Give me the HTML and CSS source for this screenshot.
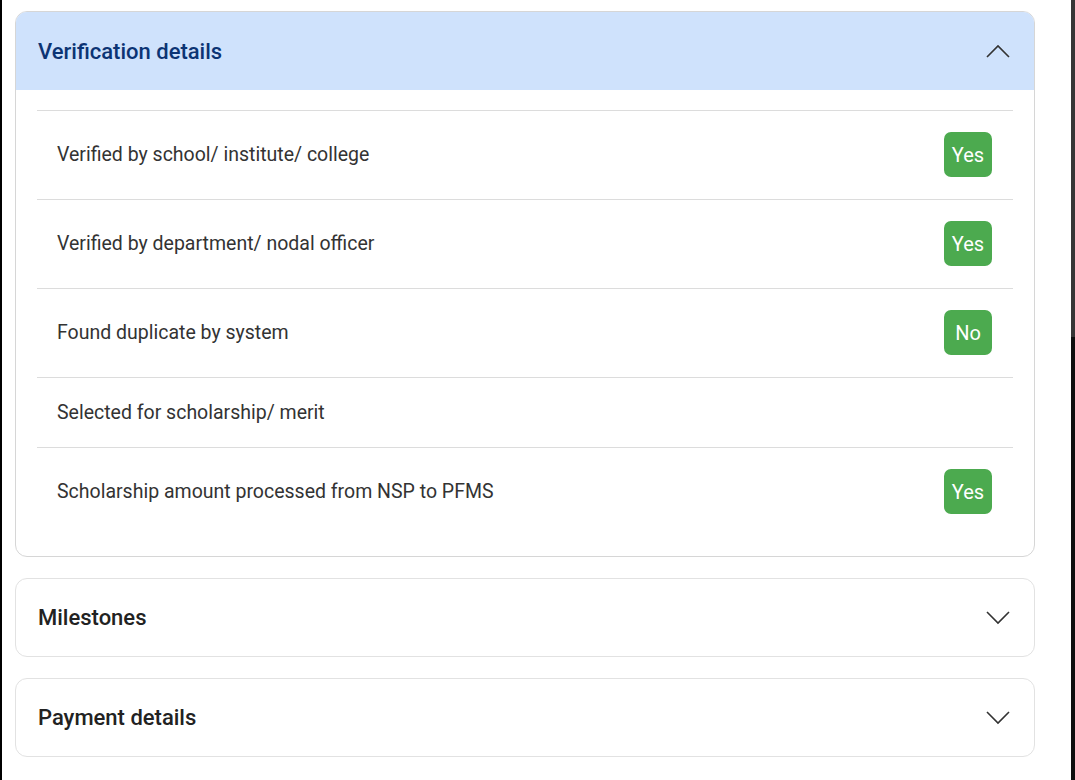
FILE: index.html
```html
<!DOCTYPE html>
<html lang="en">
<head>
  <meta charset="UTF-8" />
  <meta name="viewport" content="width=device-width, initial-scale=1.0"/>
  <title>Application Status</title>
  <link rel="stylesheet" href="styles.css">
</head>
<body>
  <div class="edge-left"></div>

  <div class="main">
    <!-- Verification details (open) -->
    <div class="card open">
      <div class="card-header">
        <h2>Verification details</h2>
        <svg class="chevron" width="24" height="14" viewBox="0 0 24 14">
          <polyline points="1,13 12,2 23,13" />
        </svg>
      </div>
      <div class="card-body">
        <div class="row">
          <span>Verified by school/ institute/ college</span>
          <span class="badge">Yes</span>
        </div>
        <div class="row">
          <span>Verified by department/ nodal officer</span>
          <span class="badge">Yes</span>
        </div>
        <div class="row">
          <span>Found duplicate by system</span>
          <span class="badge">No</span>
        </div>
        <div class="row">
          <span>Selected for scholarship/ merit</span>
        </div>
        <div class="row">
          <span>Scholarship amount processed from NSP to PFMS</span>
          <span class="badge">Yes</span>
        </div>
      </div>
    </div>

    <!-- Milestones -->
    <div class="card">
      <div class="card-header">
        <h2>Milestones</h2>
        <svg class="chevron" width="24" height="14" viewBox="0 0 24 14">
          <polyline points="1,1 12,12 23,1" />
        </svg>
      </div>
    </div>

    <!-- Payment details -->
    <div class="card">
      <div class="card-header">
        <h2>Payment details</h2>
        <svg class="chevron" width="24" height="14" viewBox="0 0 24 14">
          <polyline points="1,1 12,12 23,1" />
        </svg>
      </div>
    </div>
  </div>

  <div class="edge-right"></div>
</body>
</html>
```

FILE: styles.css
```css
body {
  margin: 0;
  height: 780px;
  overflow: hidden;
  display: flex;
  background: #fff;
  font-family: Roboto, "Liberation Sans", Arial, sans-serif;
  color: #333;
}

.edge-left {
  width: 2px;
  flex-shrink: 0;
  background: #000;
}

.edge-right {
  width: 4px;
  flex-shrink: 0;
  background: linear-gradient(#363636 0 337px, #0e0e0e 337px);
}

.main {
  flex: 1;
  min-width: 0;
  padding: 11px 36px 0 13px;
  display: flex;
  flex-direction: column;
  gap: 21px;
}

.card {
  border: 1px solid #e2e2e2;
  border-radius: 12px;
  overflow: hidden;
  background: #fff;
}

.card.open {
  border-color: #d6d6d6;
}

.card-header {
  height: 77px;
  padding: 0 24px 0 22px;
  display: flex;
  align-items: center;
  justify-content: space-between;
}

.card.open .card-header {
  height: 78px;
  background: #cfe2fc;
}

.card-header h2 {
  margin: 0;
  font-size: 22px;
  font-weight: 500;
  color: #222;
}

.card.open .card-header h2 {
  color: #0c3474;
}

.chevron polyline {
  fill: none;
  stroke: #333;
  stroke-width: 1.6;
}

.card-body {
  padding: 20px 21px 20px;
}

.row {
  border-top: 1px solid #dcdcdc;
  padding: 21px 21px 22px 20px;
  min-height: 26px;
  display: flex;
  align-items: center;
  justify-content: space-between;
  font-size: 19.5px;
  color: #333;
}

.badge {
  width: 48px;
  height: 45px;
  border-radius: 7px;
  background: #4caa4f;
  color: #fff;
  font-size: 20px;
  display: flex;
  align-items: center;
  justify-content: center;
}
```
